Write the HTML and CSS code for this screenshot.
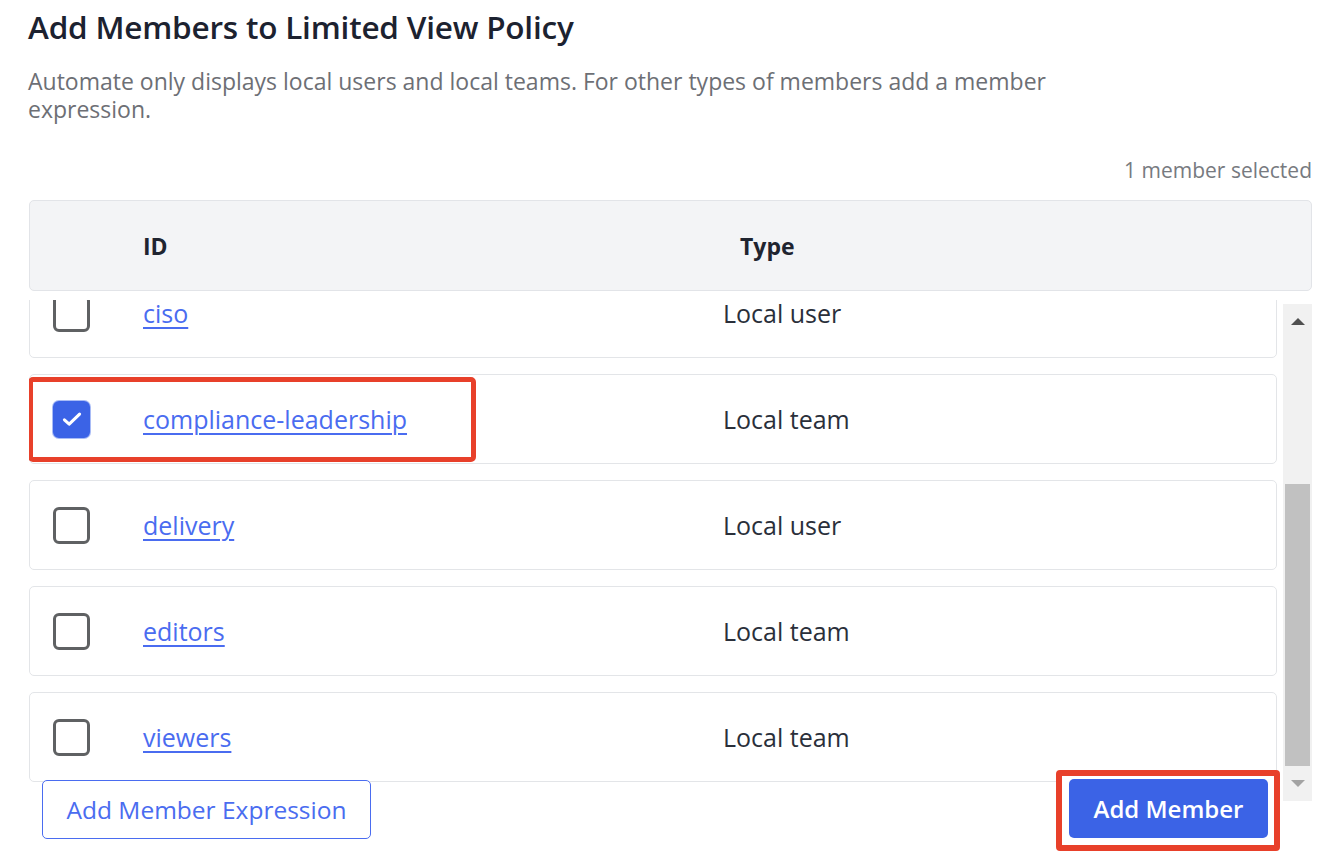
FILE: index.html
```html
<!DOCTYPE html>
<html lang="en">
<head>
<meta charset="utf-8">
<title>Add Members to Limited View Policy</title>
<link rel="stylesheet" href="styles.css">
</head>
<body>
<main class="page">
  <h1 class="title">Add Members to Limited View Policy</h1>
  <p class="desc">Automate only displays local users and local teams. For other types of members add a member expression.</p>
  <div class="count">1 member selected</div>

  <section class="table">
    <div class="thead">
      <div class="th th-id">ID</div>
      <div class="th th-type">Type</div>
    </div>
    <div class="tbody">
      <div class="viewport">
        <div class="rows">
          <div class="row">
            <span class="cb"></span>
            <a class="id" href="#">ciso</a>
            <span class="type">Local user</span>
          </div>
          <div class="row">
            <span class="cb cb-on"><svg viewBox="0 0 24 24" width="26" height="26"><path d="M5 12.8l4.4 4L19 7.5" fill="none" stroke="#fff" stroke-width="2.8" stroke-linecap="round" stroke-linejoin="round"/></svg></span>
            <a class="id" href="#">compliance-leadership</a>
            <span class="type">Local team</span>
            <span class="mark mark-row"></span>
          </div>
          <div class="row">
            <span class="cb"></span>
            <a class="id" href="#">delivery</a>
            <span class="type">Local user</span>
          </div>
          <div class="row">
            <span class="cb"></span>
            <a class="id" href="#">editors</a>
            <span class="type">Local team</span>
          </div>
          <div class="row">
            <span class="cb"></span>
            <a class="id" href="#">viewers</a>
            <span class="type">Local team</span>
          </div>
        </div>
      </div>
      <div class="scrollbar">
        <div class="arrow arrow-up"></div>
        <div class="track"><div class="thumb"></div></div>
        <div class="arrow arrow-down"></div>
      </div>
    </div>
    <div class="footer">
      <button class="btn btn-outline" type="button">Add Member Expression</button>
      <div class="mark-btn">
        <button class="btn btn-primary" type="button">Add Member</button>
      </div>
    </div>
  </section>
</main>
</body>
</html>
```

FILE: styles.css
```css
* { box-sizing: border-box; }

html, body {
  margin: 0;
  padding: 0;
  background: #ffffff;
}

body {
  font-family: "Open Sans", "Noto Sans", sans-serif;
  color: #1f2430;
}

.page {
  padding: 9px 10px 0 28px;
}

.title {
  margin: 0;
  font-size: 31.5px;
  line-height: 36px;
  font-weight: 600;
  color: #1c2230;
  letter-spacing: -0.2px;
}

.desc {
  margin: 22px 0 0;
  max-width: 1060px;
  font-size: 23px;
  line-height: 28px;
  color: #6d6f75;
}

.count {
  margin-top: 35px;
  text-align: right;
  font-size: 21px;
  line-height: 24px;
  color: #777a80;
}

.table {
  margin-top: 18px;
  margin-left: 1px;
}

.thead {
  height: 91px;
  display: flex;
  align-items: center;
  background: #f3f4f6;
  border: 1px solid #e2e4e8;
  border-radius: 5px;
}

.th {
  font-size: 23px;
  font-weight: 700;
  color: #1f2430;
}

.th-id { margin-left: 113px; width: 597px; }

.tbody {
  display: flex;
  gap: 6px;
  height: 510px;
}

.viewport {
  flex: 1;
  margin-top: 9px;
  overflow: hidden;
}

.rows {
  display: flex;
  flex-direction: column;
  gap: 16px;
  margin-top: -32px;
}

.row {
  position: relative;
  height: 90px;
  display: flex;
  align-items: center;
  border: 1.5px solid #e3e5e8;
  border-radius: 5px;
  background: #fff;
}

.cb {
  width: 37px;
  height: 37px;
  margin-left: 23px;
  border: 3px solid #5f6163;
  border-radius: 6px;
  flex: none;
  display: flex;
  align-items: center;
  justify-content: center;
}

.cb-on {
  background: #3b63e6;
  border-color: #3b63e6;
  box-shadow: 0 0 0 1px #a9bcf6;
}

.id {
  margin-left: 53px;
  width: 580px;
  font-size: 25px;
  line-height: 20px;
  color: #4a6cf0;
  text-decoration: underline;
  text-underline-offset: 4px;
  text-decoration-thickness: 1.5px;
}

.type {
  font-size: 25px;
  line-height: 20px;
  color: #2a2f3a;
}

.mark {
  position: absolute;
  border: 5px solid #e8402a;
  border-radius: 5px;
}

.mark-row {
  left: -2px;
  top: 2px;
  width: 448px;
  height: 85px;
}

.scrollbar {
  width: 29px;
  margin-top: 13px;
  background: #f1f1f1;
  display: flex;
  flex-direction: column;
  align-items: center;
}

.arrow {
  height: 35px;
  width: 100%;
  display: flex;
  align-items: center;
  justify-content: center;
  flex: none;
}

.arrow::before {
  content: "";
  border-left: 7px solid transparent;
  border-right: 7px solid transparent;
}

.arrow-up::before { border-bottom: 7px solid #505050; }
.arrow-down::before { border-top: 7px solid #a3a3a3; }

.track {
  flex: 1;
  width: 100%;
  padding: 145px 2px 0;
}

.thumb {
  height: 282px;
  background: #c1c1c1;
}

.footer {
  position: relative;
  display: flex;
  justify-content: space-between;
  align-items: flex-start;
  margin-top: -31px;
  padding-left: 13px;
  padding-right: 32px;
}

.btn {
  font-family: "Open Sans", "Noto Sans", sans-serif;
  font-size: 24.5px;
  height: 59px;
  border-radius: 5px;
  cursor: pointer;
}

.btn-outline {
  margin-top: 10px;
  width: 329px;
  background: #fff;
  border: 1.5px solid #4a6cf0;
  color: #4a6cf0;
}

.mark-btn {
  border: 6px solid #e8402a;
  border-radius: 4px;
  padding: 3px 6px 7px 7px;
  background: #fff;
}

.btn-primary {
  display: block;
  width: 199px;
  background: #3b63e6;
  border: none;
  color: #fff;
  font-weight: 600;
  font-size: 24px;
}
```
